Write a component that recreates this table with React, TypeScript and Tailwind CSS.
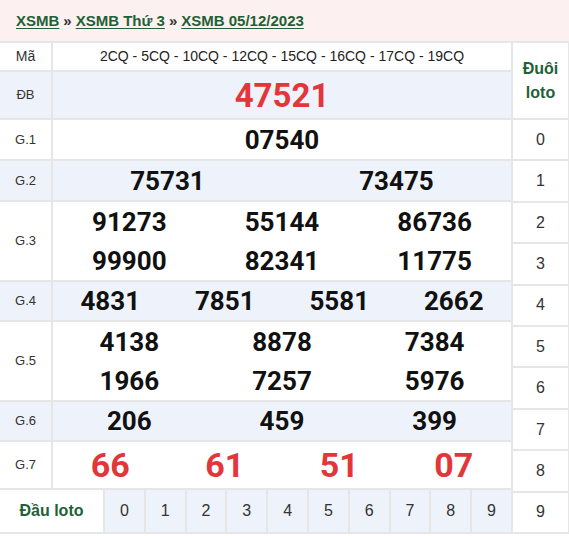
import React from "react";

const B = "border-[#e6e6e6]";
const ARIAL = { fontFamily: "'Liberation Sans', Arial, sans-serif" };

function Label({ children, size = "text-[13px]" }: { children: React.ReactNode; size?: string }) {
  return (
    <div
      className={`w-[53px] shrink-0 border-r-2 ${B} flex items-center justify-center ${size} text-[#333]`}
      style={ARIAL}
    >
      {children}
    </div>
  );
}

function Nums({ items, cols, red, size }: { items: string[]; cols: string; red?: boolean; size: string }) {
  return (
    <div className={`flex-1 grid ${cols} items-center`}>
      {items.map((n, i) => (
        <div
          key={i}
          className={`text-center font-bold leading-none ${size} ${red ? "text-[#e3363a]" : "text-[#111]"}`}
        >
          {n}
        </div>
      ))}
    </div>
  );
}

export default function App() {
  const loto = ["0", "1", "2", "3", "4", "5", "6", "7", "8", "9"];
  return (
    <div
      className="w-[569px] h-[536px] bg-white overflow-hidden"
      style={{ fontFamily: "Roboto, 'Liberation Sans', Arial, sans-serif" }}
    >
      <div className="h-[41px] bg-[#fcf0f0] flex items-center pl-4 pt-[1px] text-[15px] font-bold text-[#333]" style={ARIAL}>
        <a className="text-[#1f6137] underline underline-offset-2">XSMB</a>
        <span className="mx-[4px]">»</span>
        <a className="text-[#1f6137] underline underline-offset-2">XSMB Thứ 3</a>
        <span className="mx-[4px]">»</span>
        <a className="text-[#1f6137] underline underline-offset-2">XSMB 05/12/2023</a>
      </div>
      <div className={`flex border-t-2 ${B}`}>
        <div className="w-[511px] flex flex-col">
          <div className={`h-[29px] flex border-b-2 ${B} bg-white`}>
            <Label size="text-[14px]">Mã</Label>
            <div className="flex-1 flex items-center justify-center text-[14px] text-[#222]" style={ARIAL}>
              2CQ - 5CQ - 10CQ - 12CQ - 15CQ - 16CQ - 17CQ - 19CQ
            </div>
          </div>
          <div className={`h-[48px] flex border-b-2 ${B} bg-[#eef2fa]`}>
            <Label>ĐB</Label>
            <Nums items={["47521"]} cols="grid-cols-1" red size="text-[33px]" />
          </div>
          <div className={`h-[41px] flex border-b-2 ${B} bg-white`}>
            <Label>G.1</Label>
            <Nums items={["07540"]} cols="grid-cols-1" size="text-[26px]" />
          </div>
          <div className={`h-[41px] flex border-b-2 ${B} bg-[#eef2fa]`}>
            <Label>G.2</Label>
            <Nums items={["75731", "73475"]} cols="grid-cols-2" size="text-[26px]" />
          </div>
          <div className={`h-[80px] flex border-b-2 ${B} bg-white`}>
            <Label>G.3</Label>
            <Nums
              items={["91273", "55144", "86736", "99900", "82341", "11775"]}
              cols="grid-cols-3 grid-rows-2"
              size="text-[26px]"
            />
          </div>
          <div className={`h-[40px] flex border-b-2 ${B} bg-[#eef2fa]`}>
            <Label>G.4</Label>
            <Nums items={["4831", "7851", "5581", "2662"]} cols="grid-cols-4" size="text-[26px]" />
          </div>
          <div className={`h-[80px] flex border-b-2 ${B} bg-white`}>
            <Label>G.5</Label>
            <Nums
              items={["4138", "8878", "7384", "1966", "7257", "5976"]}
              cols="grid-cols-3 grid-rows-2"
              size="text-[26px]"
            />
          </div>
          <div className={`h-[40px] flex border-b-2 ${B} bg-[#eef2fa]`}>
            <Label>G.6</Label>
            <Nums items={["206", "459", "399"]} cols="grid-cols-3" size="text-[26px]" />
          </div>
          <div className={`h-[48px] flex border-b-2 ${B} bg-white`}>
            <Label>G.7</Label>
            <Nums items={["66", "61", "51", "07"]} cols="grid-cols-4" red size="text-[34px]" />
          </div>
          <div className={`h-[44px] flex border-b-2 ${B}`} style={ARIAL}>
            <div className={`w-[105px] shrink-0 border-r-2 ${B} bg-white flex items-center justify-center text-[16px] font-bold text-[#1f6137]`}>
              Đầu loto
            </div>
            {loto.map((d, i) => (
              <div
                key={d}
                className={`flex-1 bg-[#eef2fa] flex items-center justify-center text-[16px] text-[#333] ${i < 9 ? `border-r-2 ${B}` : ""}`}
              >
                {d}
              </div>
            ))}
          </div>
        </div>
        <div className={`w-[58px] border-l-2 border-r ${B} flex flex-col`} style={ARIAL}>
          <div className={`h-[77px] shrink-0 border-b-2 ${B} flex flex-col items-center justify-center text-[16px] font-bold text-[#1f6137] leading-[24px]`}>
            <span>Đuôi</span>
            <span>loto</span>
          </div>
          {loto.map((d) => (
            <div key={d} className={`flex-1 border-b-2 ${B} flex items-center justify-center text-[16px] text-[#333]`}>
              {d}
            </div>
          ))}
        </div>
      </div>
    </div>
  );
}
